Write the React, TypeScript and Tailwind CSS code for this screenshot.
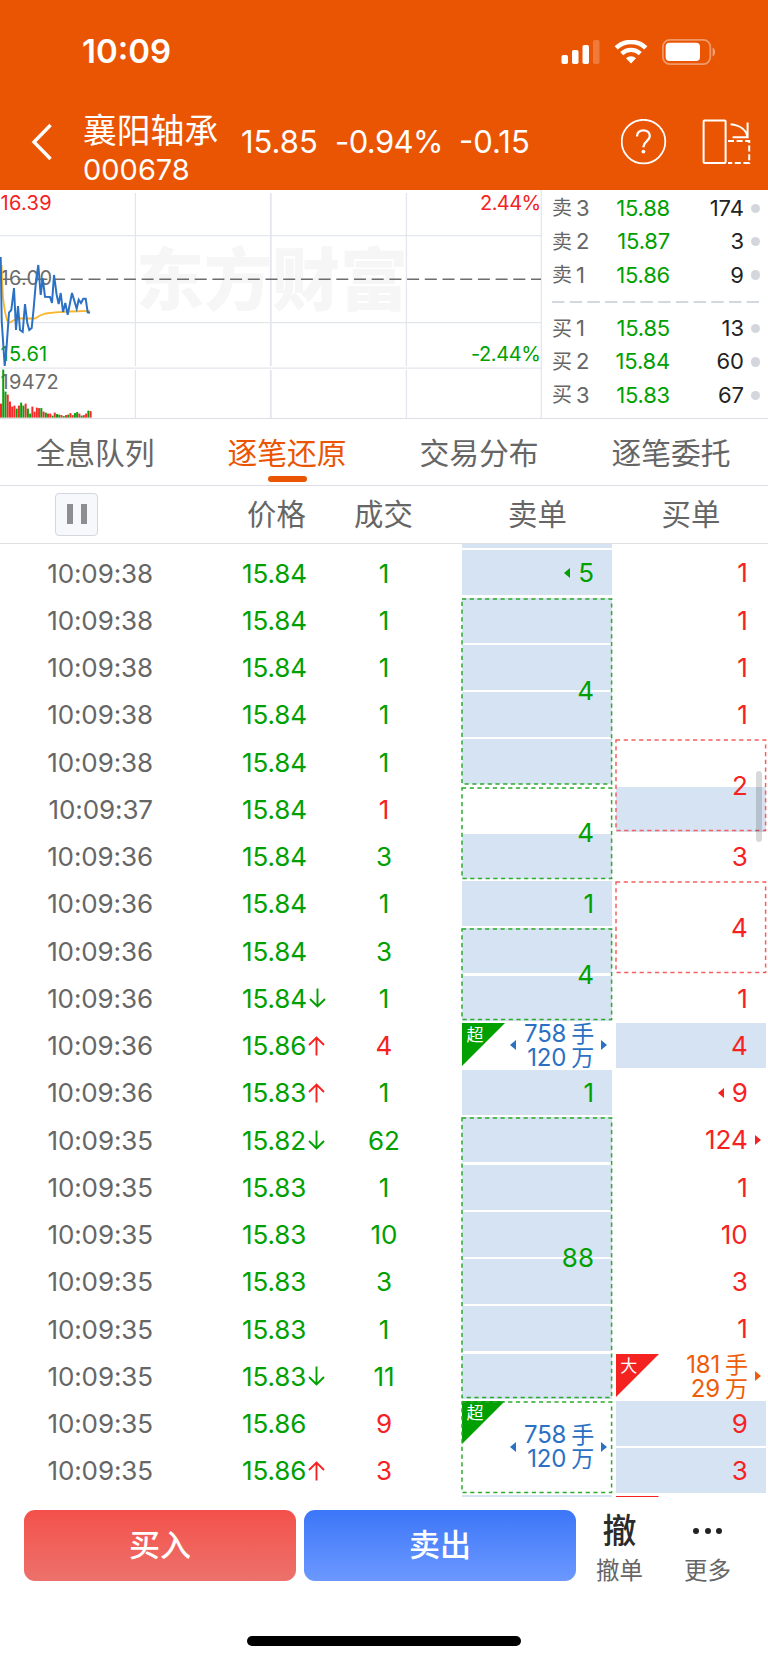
import { clsx } from "clsx";

type Tone = "green" | "red" | "blue" | "orange";

interface Tick {
  time: string;
  price: string;
  trend?: "up" | "down";
  volume: string;
  side: "buy" | "sell";
}

interface Block {
  // one entry per row the order spans, true when the row is shaded
  rows: boolean[];
  text?: string;
  amount?: string;
  tone?: Tone;
  badge?: string;
  dashed?: boolean;
  prev?: boolean;
  next?: boolean;
}

const toneText: Record<Tone, string> = {
  green: "text-[#00a000]",
  red: "text-[#f52222]",
  blue: "text-[#2b71c3]",
  orange: "text-[#ee5d0a]",
};

const ticks: Tick[] = [
  { time: "10:09:38", price: "15.84", volume: "1", side: "sell" },
  { time: "10:09:38", price: "15.84", volume: "1", side: "sell" },
  { time: "10:09:38", price: "15.84", volume: "1", side: "sell" },
  { time: "10:09:38", price: "15.84", volume: "1", side: "sell" },
  { time: "10:09:38", price: "15.84", volume: "1", side: "sell" },
  { time: "10:09:37", price: "15.84", volume: "1", side: "buy" },
  { time: "10:09:36", price: "15.84", volume: "3", side: "sell" },
  { time: "10:09:36", price: "15.84", volume: "1", side: "sell" },
  { time: "10:09:36", price: "15.84", volume: "3", side: "sell" },
  { time: "10:09:36", price: "15.84", trend: "down", volume: "1", side: "sell" },
  { time: "10:09:36", price: "15.86", trend: "up", volume: "4", side: "buy" },
  { time: "10:09:36", price: "15.83", trend: "up", volume: "1", side: "sell" },
  { time: "10:09:35", price: "15.82", trend: "down", volume: "62", side: "sell" },
  { time: "10:09:35", price: "15.83", volume: "1", side: "sell" },
  { time: "10:09:35", price: "15.83", volume: "10", side: "sell" },
  { time: "10:09:35", price: "15.83", volume: "3", side: "sell" },
  { time: "10:09:35", price: "15.83", volume: "1", side: "sell" },
  { time: "10:09:35", price: "15.83", trend: "down", volume: "11", side: "sell" },
  { time: "10:09:35", price: "15.86", volume: "9", side: "buy" },
  { time: "10:09:35", price: "15.86", trend: "up", volume: "3", side: "buy" },
];

const sellBlocks: Block[] = [
  { rows: [true] },
  { rows: [true], text: "5", prev: true },
  { rows: [true, true, true, true], text: "4", dashed: true },
  { rows: [false, true], text: "4", dashed: true },
  { rows: [true], text: "1" },
  { rows: [true, true], text: "4", dashed: true },
  { rows: [false], text: "758", amount: "120", tone: "blue", badge: "超", prev: true, next: true },
  { rows: [true], text: "1" },
  { rows: [true, true, true, true, true, true], text: "88", dashed: true },
  { rows: [false, false], text: "758", amount: "120", tone: "blue", badge: "超", dashed: true, prev: true, next: true },
  { rows: [true] },
];

const buyBlocks: Block[] = [
  { rows: [false] },
  { rows: [false], text: "1" },
  { rows: [false], text: "1" },
  { rows: [false], text: "1" },
  { rows: [false], text: "1" },
  { rows: [false, true], text: "2", dashed: true },
  { rows: [false], text: "3" },
  { rows: [false, false], text: "4", dashed: true },
  { rows: [false], text: "1" },
  { rows: [true], text: "4" },
  { rows: [false], text: "9", prev: true },
  { rows: [false], text: "124", next: true },
  { rows: [false], text: "1" },
  { rows: [false], text: "10" },
  { rows: [false], text: "3" },
  { rows: [false], text: "1" },
  { rows: [false], text: "181", amount: "29", tone: "orange", badge: "大", next: true },
  { rows: [true], text: "9" },
  { rows: [true], text: "3" },
  { rows: [false], badge: " " },
];

const asks = [
  ["卖", "3", "15.88", "174"],
  ["卖", "2", "15.87", "3"],
  ["卖", "1", "15.86", "9"],
];

const bids = [
  ["买", "1", "15.85", "13"],
  ["买", "2", "15.84", "60"],
  ["买", "3", "15.83", "67"],
];

const pricePoints =
  "0.7,67 1.7,131 4.7,176 6.7,155 9,122.7 11.3,120 14,98 16,140 18,116 20,140 22.7,142 25,114 27.3,133 29.3,140 31.7,138 33.7,118 36,91 38.3,75 40.7,105 42.7,88 45,106.7 50,107 52,113 54,85 56.7,105 58.7,114 60.7,103 63,122 65.3,113 67.7,124.7 72,103 76.7,118.7 78.7,109.7 81,113 83.3,108.7 85.7,108.7 87.7,122.3 90,122.7";

const averagePoints =
  "1.5,75 3,108 5,122 7,130 9,132.7 11,132 14,130 20,128.5 35,128.5 40,125.5 46,123.5 55,122.3 70,121.5 90,120.8";

// [height, rising]
const volumes: [number, boolean][] = [
  [14, true], [48, false], [26, false], [23, true], [16, true], [11, true], [12, true], [9, false],
  [12, true], [15, false], [12, false], [14, true], [9, false], [4, false], [11, true], [6, true],
  [10, true], [9.5, true], [9.5, false], [6, true], [5, false], [4, true], [4, true], [2, false],
  [5, true], [3.5, false], [3, false], [2.5, true], [1.5, false], [2.5, true], [3, false], [4.5, true],
  [2.5, true], [4.5, false], [5.5, false], [4, true], [2, false], [2.5, true], [4, true], [7, false],
  [6.5, true],
];

function StatusBar() {
  return (
    <div className="flex h-[103px] items-center pl-[82px] pr-[52px] text-white">
      <span className="text-[33px] font-semibold">10:09</span>
      <svg className="ml-auto" width="39" height="24" viewBox="0 0 39 24" fill="currentColor">
        <rect x="0.5" y="15" width="6.5" height="9" rx="1.8" />
        <rect x="11" y="10" width="6.5" height="14" rx="1.8" />
        <rect x="21.5" y="5" width="6.5" height="19" rx="1.8" />
        <rect x="32" y="0" width="6.5" height="24" rx="1.8" opacity="0.22" />
      </svg>
      <svg className="ml-[14px]" width="34" height="24" viewBox="0 0 34 24" fill="none" stroke="currentColor">
        <path d="M2.2 7.9a21.5 21.5 0 0 1 29.6 0" strokeWidth="4.6" />
        <path d="M7.7 13.6a13.6 13.6 0 0 1 18.6 0" strokeWidth="4.4" />
        <path d="M12 18.2a7.4 7.4 0 0 1 10 0l-5 5.3z" fill="currentColor" stroke="none" />
      </svg>
      <svg className="ml-[14px]" width="54" height="26" viewBox="0 0 54 26">
        <rect x="0.9" y="0.9" width="47.4" height="24.2" rx="7" fill="none" stroke="#fff" strokeOpacity="0.4" strokeWidth="1.7" />
        <rect x="3.6" y="3.8" width="34.4" height="18.2" rx="4" fill="#fff" />
        <path d="M50.6 8.6c3.4 1.6 3.4 7.4 0 9z" fill="#fff" fillOpacity="0.45" />
      </svg>
    </div>
  );
}

function NavBar() {
  return (
    <div className="flex h-[77px] items-center pl-[31px] text-white">
      <svg width="22" height="38" viewBox="0 0 22 38" fill="none" stroke="currentColor" strokeWidth="3.4">
        <path d="M19.6 2 3 19l16.6 17" />
      </svg>
      <div className="ml-[30px] w-[158px] pt-[17px]">
        <div className="text-[33.8px] leading-[39px]">襄阳轴承</div>
        <div className="text-[29px] leading-[39px]">000678</div>
      </div>
      <div className="flex pt-[2px] text-[31px]">
        <span className="w-[94px]">15.85</span>
        <span className="w-[124px] tracking-[-0.6px]">-0.94%</span>
        <span>-0.15</span>
      </div>
      <svg className="ml-auto" width="46" height="46" viewBox="0 0 46 46" fill="none" stroke="currentColor">
        <circle cx="22.5" cy="22.6" r="21.8" strokeWidth="1.8" />
        <path d="M16 17.4c0-3.8 2.7-6 6.4-6s6.4 2.2 6.4 5.7c0 5.2-6.3 5.3-6.3 10.3v.9" strokeWidth="2.3" />
        <circle cx="22.4" cy="32.6" r="1.9" fill="currentColor" stroke="none" />
      </svg>
      <svg className="ml-[35px] mr-[17px]" width="49" height="46" viewBox="0 0 49 46" fill="none" stroke="currentColor" strokeWidth="2">
        <rect x="1.6" y="1.6" width="22" height="42.4" rx="1" />
        <path d="M26 22H47.2V44H26" strokeDasharray="6 2.6" />
        <path d="M28.6 5.2C38 6.2 44.2 11 45.4 17.6M45.6 3.4V18.2H30.6" />
      </svg>
    </div>
  );
}

function TrendChart() {
  return (
    <svg className="h-[228px] w-[542px] shrink-0" viewBox="0 0 542 228" fill="none">
      <text x="136" y="115" fontSize="68" fontWeight="900" fill="#f6f6f6">
        东方财富
      </text>
      <g stroke="#e3e6ed" strokeWidth="1.3">
        <path d="M0 45.7H541M0 132.7H541M0 178.2H541" />
        <path d="M135.4 3V176M135.4 180V228M406.4 3V176M406.4 180V228M541.3 0V228" />
        <path d="M270.8 3V176M270.8 180V228" strokeWidth="1.8" />
      </g>
      <g fontSize="20">
        <text x="0.5" y="20" letterSpacing="0.3" fill="#f52222">16.39</text>
        <text x="540.5" y="20" textAnchor="end" letterSpacing="-0.6" fill="#f52222">2.44%</text>
        <text x="0.5" y="95.2" letterSpacing="0.3" fill="#6b6b6b">16.00</text>
        <text x="0.5" y="171" letterSpacing="0.3" fill="#00a000">15.61</text>
        <text x="540.5" y="171" textAnchor="end" letterSpacing="-0.4" fill="#00a000">-2.44%</text>
        <text x="0.5" y="199" letterSpacing="0.3" fill="#6b6b6b">19472</text>
      </g>
      <path d="M0 89.2H541" stroke="#6c6c6c" strokeWidth="1.4" strokeDasharray="12 5.7" />
      <polyline points={averagePoints} stroke="#fbb62c" strokeWidth="1.8" />
      <polyline points={pricePoints} stroke="#2b71c3" strokeWidth="2" />
      {volumes.map(([height, rising], i) => (
        <rect key={i} x={i * 2.24} y={227.6 - height} width="2" height={height} fill={rising ? "#f52a2a" : "#0ba00b"} />
      ))}
    </svg>
  );
}

function QuoteRow({ quote }: { quote: string[] }) {
  const [label, level, price, volume] = quote;
  return (
    <div className="flex h-[33.4px] items-center text-[22px]">
      <span className="w-[24px] text-[20px] text-[#666]">{label}</span>
      <span className="w-[21px] text-[#666]">{level}</span>
      <span className="w-[73px] text-right tracking-[-0.2px] text-[#00a000]">{price}</span>
      <span className="w-[74px] text-right text-[#222]">{volume}</span>
      <span className="ml-[7px] size-[9.4px] rounded-full bg-[#d3d6dc]" />
    </div>
  );
}

function OrderBook() {
  return (
    <div className="flex-1 pl-[10px] pt-[1.7px]">
      {asks.map((q) => (
        <QuoteRow key={q[0] + q[1]} quote={q} />
      ))}
      <svg className="my-[9px] block" width="207" height="2" stroke="#d3d8de" strokeWidth="2">
        <path d="M0 1H207" strokeDasharray="12.4 5.3" />
      </svg>
      {bids.map((q) => (
        <QuoteRow key={q[0] + q[1]} quote={q} />
      ))}
    </div>
  );
}

function Tabs() {
  const tabs = ["全息队列", "逐笔还原", "交易分布", "逐笔委托"];
  return (
    <div className="-ml-px flex h-[67.5px] border-y border-[#dcdee6] text-[29.8px]">
      {tabs.map((tab, i) => (
        <div
          key={tab}
          className={clsx("flex w-48 flex-col items-center pt-[12px]", i === 1 ? "text-[#ea5504]" : "text-[#666]")}
        >
          <span className="leading-[44px]">{tab}</span>
          {i === 1 && <span className="mt-px h-[6px] w-[39px] rounded-full bg-[#ea5504]" />}
        </div>
      ))}
    </div>
  );
}

function ColumnHeader() {
  return (
    <div className="flex h-[58px] items-center border-b border-[#dfdfe4] text-[29.4px] text-[#666]">
      <div className="w-[223px] pl-[55px]">
        <div className="flex size-[43px] items-center justify-center gap-[8px] rounded-[4px] border border-[#d3d7df] bg-[#f6f8fb]">
          <span className="h-[20px] w-[6px] bg-[#8d8d94]" />
          <span className="h-[20px] w-[6px] bg-[#8d8d94]" />
        </div>
      </div>
      <div className="w-[107px] pt-[2px] text-center">价格</div>
      <div className="w-[107px] pt-[2px] text-center">成交</div>
      <div className="ml-[26px] w-[149px] pt-[2px] text-center">卖单</div>
      <div className="ml-[4px] w-[150px] pt-[2px] text-center">买单</div>
    </div>
  );
}

function TrendArrow({ trend }: { trend: "up" | "down" }) {
  return (
    <svg
      className={clsx("ml-[2px]", trend === "up" ? "text-[#f52222]" : "rotate-180 text-[#00a000]")}
      width="17"
      height="20"
      viewBox="0 0 17 20"
      fill="none"
      stroke="currentColor"
      strokeWidth="1.9"
    >
      <path d="M8.5 19.5V1.8M1 9 8.5 1.6 16 9" />
    </svg>
  );
}

function TickRow({ tick }: { tick: Tick }) {
  return (
    <div className="flex h-[47.25px] items-center pb-[2.25px] text-[26px]">
      <span className="w-[153px] text-right tracking-[-0.1px] text-[#666]">{tick.time}</span>
      <span className="ml-[89px] flex w-[89px] items-center tracking-[-0.1px] text-[#00a000]">
        {tick.price}
        {tick.trend && <TrendArrow trend={tick.trend} />}
      </span>
      <span className={clsx("w-[106px] text-center", tick.side === "buy" ? "text-[#f52222]" : "text-[#00a000]")}>
        {tick.volume}
      </span>
    </div>
  );
}

function BlockView({ block, side }: { block: Block; side: "green" | "red" }) {
  const { rows, text, amount, badge, dashed, prev, next } = block;
  const tone = block.tone ?? side;
  const stroke = side === "green" ? "#2cab2c" : "#f56060";
  return (
    <div className="relative">
      {rows.map((shaded, i) => (
        <div key={i} className="h-[47.25px] pb-[2.25px]">
          <div className={clsx("h-full", shaded && "bg-[#d6e3f3]")} />
        </div>
      ))}
      {badge && (
        <div className="absolute left-0 top-[0.5px]">
          <svg width="43" height="43" viewBox="0 0 43 43" fill={side === "green" ? "#00a000" : "#f52222"}>
            <path d="M0 0H43L0 43z" />
          </svg>
          <span className="absolute left-[4px] top-[3px] text-[17px] leading-[18px] text-white">{badge}</span>
        </div>
      )}
      {dashed && (
        <svg className="absolute inset-0 h-full w-full overflow-visible" fill="none">
          <rect
            x="0"
            y="1"
            width="149.6"
            height={rows.length * 47.25 - 4}
            stroke={stroke}
            strokeWidth="1.5"
            strokeDasharray="4.2 3.5"
          />
        </svg>
      )}
      {text && (
        <div className={clsx("absolute inset-x-0 top-0 bottom-[2.25px] flex items-center justify-end pr-[18px]", toneText[tone])}>
          {prev && (
            <svg className="mr-[8px]" width="6" height="10" viewBox="0 0 6 10" fill="currentColor">
              <path d="M6 0V10L0 5z" />
            </svg>
          )}
          {amount ? (
            <div className="pt-[1px] text-right text-[24px] leading-[24px] tracking-[-0.2px]">
              <div className="flex justify-end gap-[5px]">
                {text}
                <span className="text-[23px]">手</span>
              </div>
              <div className="flex justify-end gap-[5px]">
                {amount}
                <span className="text-[23px]">万</span>
              </div>
            </div>
          ) : (
            <span className="text-[26px]">{text}</span>
          )}
          {next && (
            <svg className="absolute right-[4.5px]" width="6" height="10" viewBox="0 0 6 10" fill="currentColor">
              <path d="M0 0V10L6 5z" />
            </svg>
          )}
        </div>
      )}
    </div>
  );
}

function TickList() {
  return (
    <div className="relative flex h-[953px] overflow-hidden">
      <div className="w-[462.4px] pt-[7px]">
        {ticks.map((tick, i) => (
          <TickRow key={i} tick={tick} />
        ))}
      </div>
      <div className="-mt-[40.5px] w-[149.6px]">
        {sellBlocks.map((block, i) => (
          <BlockView key={i} block={block} side="green" />
        ))}
      </div>
      <div className="-mt-[40.5px] ml-[4.2px] w-[149.6px]">
        {buyBlocks.map((block, i) => (
          <BlockView key={i} block={block} side="red" />
        ))}
      </div>
      <div className="absolute right-[6px] top-[227.5px] h-[71px] w-[6px] rounded-full bg-black/15" />
    </div>
  );
}

function ActionBar() {
  return (
    <div className="flex pl-6 pt-[13.5px]">
      <button className="h-[71px] w-[272px] rounded-[11px] bg-gradient-to-b from-[#f4504a] to-[#ec716b] text-[31px] font-medium text-white">
        买入
      </button>
      <button className="ml-[8px] h-[71px] w-[272px] rounded-[11px] bg-gradient-to-b from-[#3b76f8] to-[#6c98ff] text-[31px] font-medium text-white">
        卖出
      </button>
      <div className="ml-[7.5px] flex w-[72px] flex-col items-center text-[#666]">
        <span className="h-[42px] text-[34px] font-medium leading-[42px] text-[#2b2b2b]">撤</span>
        <span className="text-[23.5px] leading-[38px]">撤单</span>
      </div>
      <div className="ml-[16px] flex w-[72px] flex-col items-center text-[#666]">
        <span className="flex h-[42px] items-center gap-[5.5px]">
          <i className="size-[6px] rounded-full bg-[#222]" />
          <i className="size-[6px] rounded-full bg-[#222]" />
          <i className="size-[6px] rounded-full bg-[#222]" />
        </span>
        <span className="text-[23.5px] leading-[38px]">更多</span>
      </div>
    </div>
  );
}

export default function App() {
  return (
    <div className="flex h-[1663px] w-[768px] flex-col overflow-hidden bg-white font-['Inter','Noto_Sans_CJK_SC',sans-serif]">
      <header className="h-[190px] shrink-0 bg-[#ea5504]">
        <StatusBar />
        <NavBar />
      </header>
      <section className="flex h-[228px] shrink-0">
        <TrendChart />
        <OrderBook />
      </section>
      <Tabs />
      <ColumnHeader />
      <TickList />
      <ActionBar />
      <div className="mx-auto mb-[17px] mt-auto h-[10px] w-[274px] shrink-0 rounded-full bg-black" />
    </div>
  );
}
